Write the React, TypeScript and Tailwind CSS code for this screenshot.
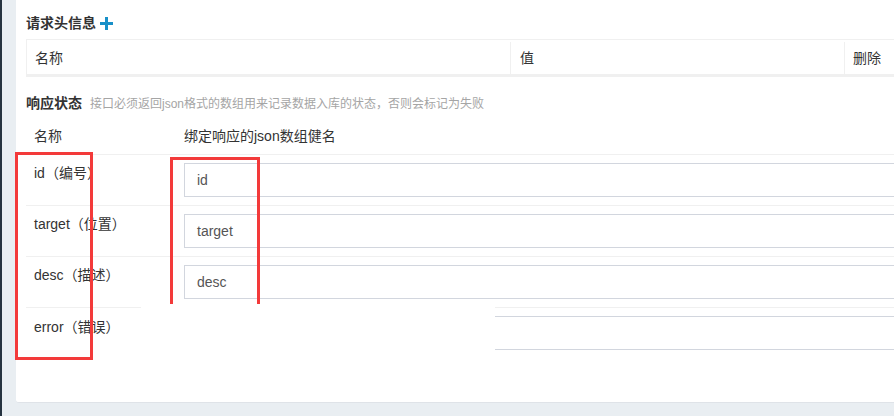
const font = { fontFamily: '"Liberation Sans", "Noto Sans CJK SC", sans-serif' };

const rows = [
  { name: 'id（编号）', key: 'id' },
  { name: 'target（位置）', key: 'target' },
  { name: 'desc（描述）', key: 'desc' },
];

function PlusIcon() {
  return (
    <svg className="ml-[4px]" width="13" height="13" viewBox="0 0 13 13">
      <rect x="5" y="0" width="3" height="13" fill="#1890c8" />
      <rect x="0" y="5" width="13" height="3" fill="#1890c8" />
    </svg>
  );
}

function KeyInput({ value }: { value: string }) {
  return (
    <div className="h-[34px] w-full border border-[#d2d6de] pl-[12px] flex items-center text-[14px] text-[#555]">
      {value}
    </div>
  );
}

export default function App() {
  return (
    <div className="relative flex h-[416px] w-[894px] overflow-hidden bg-[#e9eef2]" style={font}>
      <div className="w-[2px] shrink-0 bg-[#263340]" />
      <div className="flex-1 pl-[14px] pb-[13px]">
        <div className="h-full bg-white rounded-bl-[3px] border-b border-[#dfe3e8] pl-[10px] overflow-hidden">
          {/* request header */}
          <div className="pt-[14px] flex items-center h-[32px] text-[14px] font-bold text-[#333] leading-[18px]">
            请求头信息
            <PlusIcon />
          </div>
          <div className="mt-[7px] flex h-[38px] w-[900px] border border-[#f0f0f0] border-b-[3px] pt-[2px] text-[14px] text-[#333]">
            <div className="w-[484px] pl-[8px] flex items-center border-r border-[#f0f0f0]">名称</div>
            <div className="w-[334px] pl-[9px] flex items-center border-r border-[#f0f0f0]">值</div>
            <div className="flex-1 pl-[8px] flex items-center">删除</div>
          </div>

          {/* response status */}
          <div className="mt-[17px] flex items-baseline h-[18px] leading-[18px]">
            <span className="text-[14px] font-bold text-[#333]">响应状态</span>
            <span className="ml-[8px] text-[12px] text-[#a5a5a5]">接口必须返回json格式的数组用来记录数据入库的状态，否则会标记为失败</span>
          </div>
          <div className="flex h-[43px] pb-[8px] items-end leading-[20px] text-[14px] text-[#333] border-b border-[#f0f0f0]">
            <div className="w-[158px] pl-[8px]">名称</div>
            <div>绑定响应的json数组健名</div>
          </div>
          {rows.map((r, i) => (
            <div
              key={r.key}
              className={
                i < rows.length - 1
                  ? 'flex h-[51px] border-b border-[#f0f0f0] text-[14px] text-[#333]'
                  : 'flex h-[50px] text-[14px] text-[#333]'
              }
            >
              <div className="w-[158px] pl-[8px] pt-[8px] leading-[20px]">{r.name}</div>
              <div className="flex-1 pt-[8px]">
                <KeyInput value={r.key} />
              </div>
            </div>
          ))}
          <div className="flex h-[51px] text-[14px] text-[#333]">
            <div className="w-[115px] shrink-0 border-t border-[#f0f0f0] pl-[8px] pt-[9px] leading-[20px] whitespace-nowrap">error（错误）</div>
            <div className="w-[354px] shrink-0" />
            <div className="flex-1 border-t border-[#f0f0f0] pt-[8px]">
              <div className="h-[34px] border-y border-[#d2d6de]" />
            </div>
          </div>
        </div>
      </div>

      {/* annotation boxes */}
      <div className="absolute left-[15px] top-[152px] w-[78px] h-[208px] border-[3px] border-[#f33a3a]" />
      <div className="absolute left-[170px] top-[157px] w-[90px] h-[147px] border-[3px] border-b-0 border-[#f33a3a]" />
    </div>
  );
}
